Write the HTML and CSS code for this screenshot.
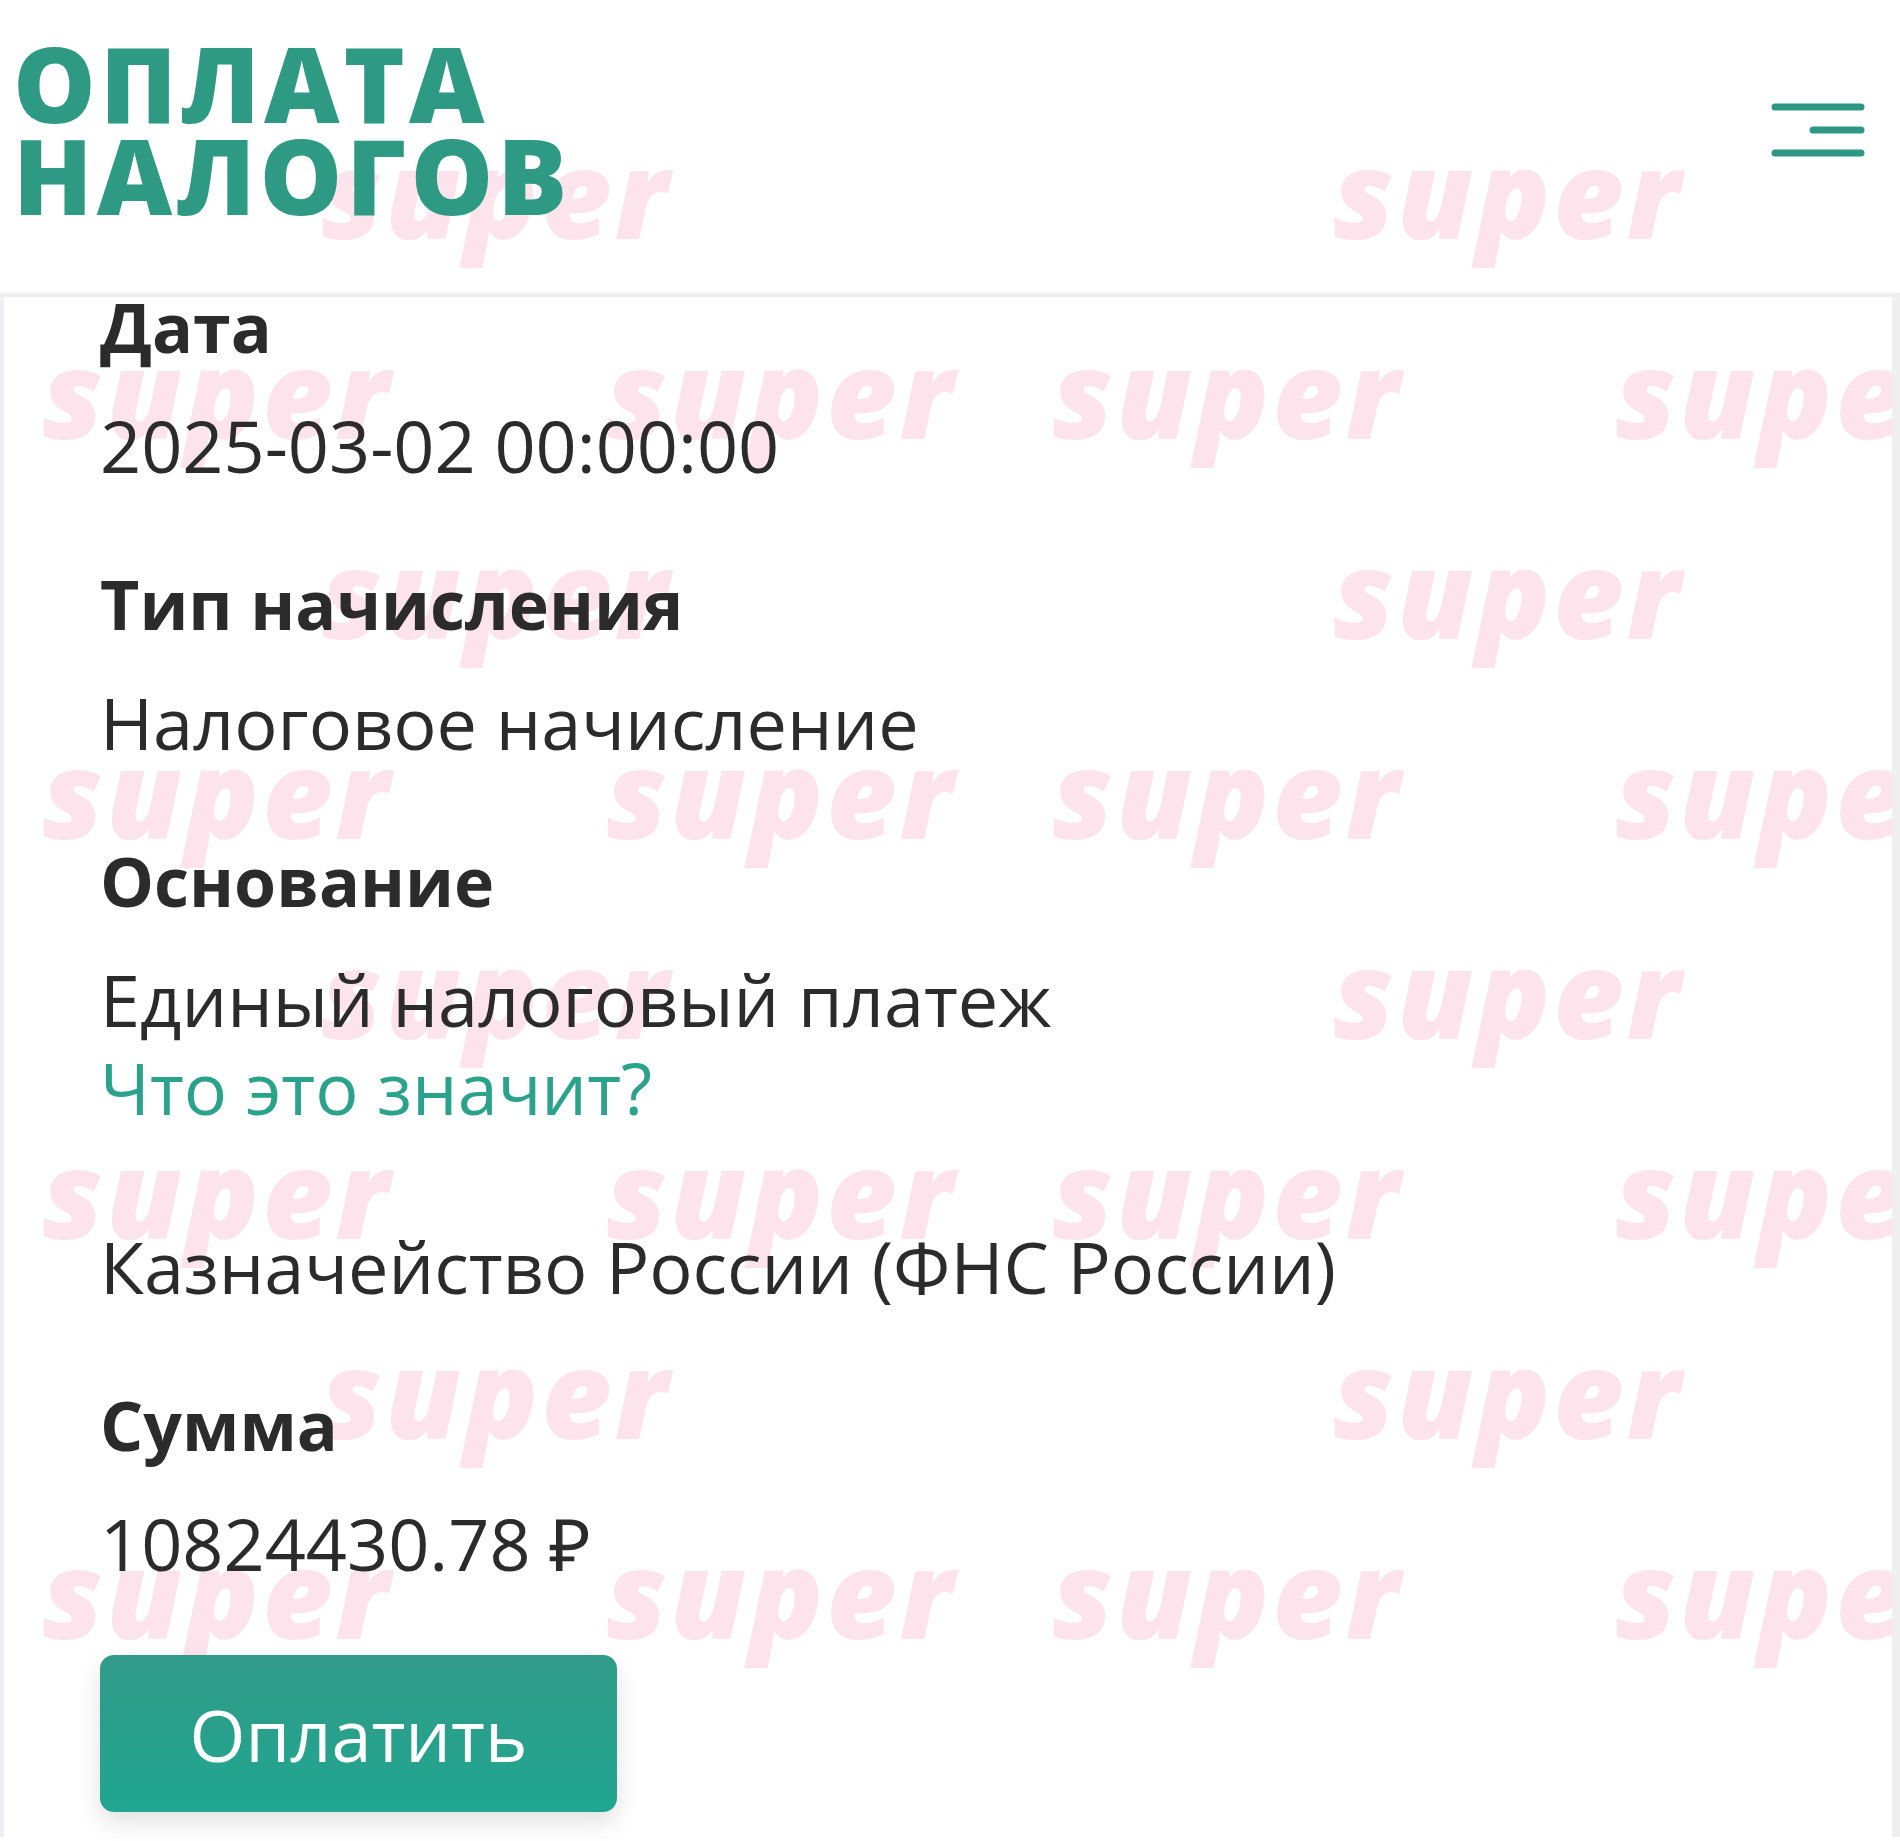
FILE: index.html
```html
<!DOCTYPE html>
<html lang="ru">
<head>
    <meta charset="UTF-8">
    <meta name="viewport" content="width=device-width, initial-scale=1.0">
    <title>Оплата налогов</title>
    <link rel="stylesheet" href="styles.css">
</head>
<body>
    <div class="watermark">
        <div class="wm-row wm-a"><span>super</span><span>super</span></div>
        <div class="wm-row wm-b"><span>super</span><span>super</span><span>super</span><span>super</span></div>
        <div class="wm-row wm-a"><span>super</span><span>super</span></div>
        <div class="wm-row wm-b"><span>super</span><span>super</span><span>super</span><span>super</span></div>
        <div class="wm-row wm-a"><span>super</span><span>super</span></div>
        <div class="wm-row wm-b"><span>super</span><span>super</span><span>super</span><span>super</span></div>
        <div class="wm-row wm-a"><span>super</span><span>super</span></div>
        <div class="wm-row wm-b"><span>super</span><span>super</span><span>super</span><span>super</span></div>
    </div>

    <div class="page">
        <header class="top-bar">
            <h1 class="title">ОПЛАТА<br>НАЛОГОВ</h1>
            <button class="menu-btn" aria-label="Меню">
                <svg width="100" height="56" viewBox="0 0 100 56">
                    <line x1="4" y1="4" x2="90" y2="4" />
                    <line x1="42" y1="27" x2="90" y2="27" />
                    <line x1="4" y1="50" x2="90" y2="50" />
                </svg>
            </button>
        </header>

        <section class="card">
            <div class="field">
                <div class="label">Дата</div>
                <div class="value">2025-03-02 00:00:00</div>
            </div>
            <div class="field">
                <div class="label">Тип начисления</div>
                <div class="value">Налоговое начисление</div>
            </div>
            <div class="field">
                <div class="label">Основание</div>
                <div class="value">Единый налоговый платеж</div>
                <a class="hint" href="#">Что это значит?</a>
            </div>
            <div class="field field-plain">
                <div class="value">Казначейство России (ФНС России)</div>
            </div>
            <div class="field">
                <div class="label">Сумма</div>
                <div class="value">10824430.78 ₽</div>
            </div>
            <button class="pay-btn">Оплатить</button>
        </section>
    </div>
</body>
</html>
```

FILE: styles.css
```css
body {
    margin: 0;
    background: #fff;
    font-family: 'Open Sans', sans-serif;
    color: #2b2b2b;
    position: relative;
    min-height: 1841px;
    overflow: hidden;
}

.watermark {
    position: absolute;
    top: 0;
    left: 0;
    right: 0;
    padding-top: 92px;
    z-index: 0;
    pointer-events: none;
}

.wm-row {
    display: flex;
    height: 200px;
    align-items: center;
    white-space: nowrap;
}

.wm-row span {
    font-family: 'Open Sans', sans-serif;
    font-weight: 800;
    font-style: italic;
    font-size: 122px;
    letter-spacing: 3px;
    color: #fde3ec;
    width: 352px;
    flex: none;
}

.wm-a span:nth-child(1) { margin-left: 321px; }
.wm-a span:nth-child(2) { margin-left: 660px; }
.wm-b span:nth-child(1) { margin-left: 42px; }
.wm-b span:nth-child(2) { margin-left: 212px; }
.wm-b span:nth-child(3) { margin-left: 94px; }
.wm-b span:nth-child(4) { margin-left: 211px; }

.page {
    position: relative;
    z-index: 1;
}

.top-bar {
    height: 293px;
    display: flex;
    justify-content: space-between;
    align-items: flex-start;
    padding: 0 29px 0 13px;
}

.title {
    margin: 37px 0 0;
    font-family: 'Open Sans', sans-serif;
    font-weight: 800;
    font-size: 104px;
    line-height: 92px;
    letter-spacing: 4px;
    color: #2f9a83;
}

.menu-btn {
    margin-top: 103px;
    padding: 0;
    border: none;
    background: none;
    cursor: pointer;
}

.menu-btn line {
    stroke: #2e9784;
    stroke-width: 7;
    stroke-linecap: round;
}

.card {
    border: 4px solid #efeff2;
    border-right-width: 8px;
    border-bottom: none;
    box-shadow: 0 -1px 3px rgba(0, 0, 0, 0.04);
    padding: 0 0 0 96px;
    height: 1540px;
}

.field {
    margin-bottom: 85px;
}

.field-plain {
    padding-top: 6px;
}

.label {
    font-size: 68px;
    font-weight: 700;
    line-height: 60px;
    margin-bottom: 44px;
}

.value,
.hint {
    display: block;
    font-size: 72px;
    line-height: 88px;
}

.hint {
    color: #2aa28c;
    text-decoration: none;
}

.pay-btn {
    margin-top: -17px;
    width: 517px;
    height: 157px;
    border: none;
    border-radius: 14px;
    background: linear-gradient(180deg, #319b88, #20a690);
    color: #fff;
    font-family: 'Open Sans', sans-serif;
    font-size: 72px;
    box-shadow: 0 10px 24px rgba(0, 0, 0, 0.12);
    cursor: pointer;
}
```
